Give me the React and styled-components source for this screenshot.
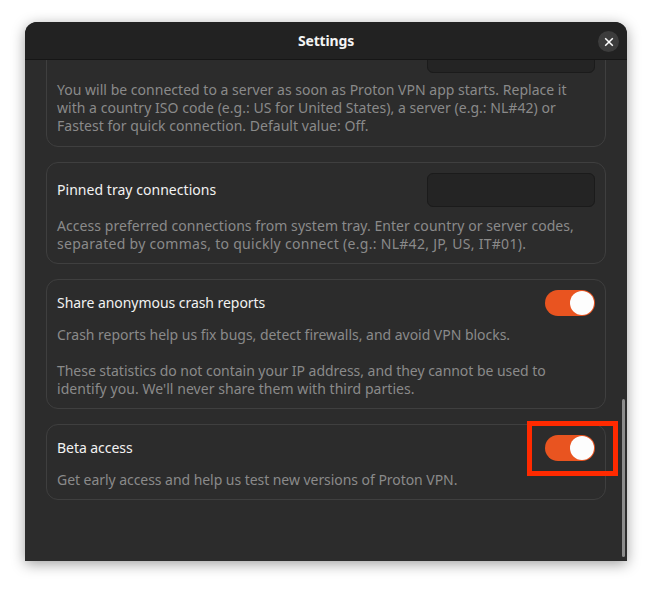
import React from "react";
import styled, { createGlobalStyle } from "styled-components";

const Global = createGlobalStyle`
  html, body { margin: 0; padding: 0; background: #fff; }
  body { width: 652px; height: 589px; overflow: hidden; font-family: "Noto Sans", "Open Sans", sans-serif; }
`;
const Page = styled.div`
  width: 652px;
  height: 589px;
  padding: 22px 25px 28px;
  box-sizing: border-box;
`;
const Window = styled.div`
  position: relative;
  width: 602px;
  height: 539px;
  display: flex;
  flex-direction: column;
  background: #2c2c2c;
  border-radius: 12px 12px 0 0;
  box-shadow: 0 3px 14px rgba(0, 0, 0, 0.38);
  overflow: hidden;
`;
const Header = styled.header`
  flex: none;
  height: 37px;
  display: flex;
  align-items: center;
  justify-content: center;
  background: #222222;
  border-bottom: 1px solid #161616;
`;
const Title = styled.h1`
  margin: 0;
  font-size: 14px;
  font-weight: 700;
  color: #f4f4f4;
  letter-spacing: -0.17px;
`;
const Close = styled.button`
  position: absolute;
  top: 9px;
  right: 8px;
  width: 21px;
  height: 21px;
  padding: 0;
  border: 0;
  border-radius: 50%;
  background: #3c3c3c;
  color: #fff;
  display: flex;
  align-items: center;
  justify-content: center;
`;
const Viewport = styled.div`
  flex: 1;
  min-height: 0;
  overflow: hidden;
`;
const Content = styled.div`
  display: flex;
  flex-direction: column;
  gap: 15px;
  margin: -27px 21px 0;
`;
const Card = styled.section`
  box-sizing: border-box;
  height: ${(p) => p.$h}px;
  padding: ${(p) => p.$pt}px 10px 0;
  border: 1px solid #3f3f3f;
  border-radius: 12px;
`;
const Row = styled.div`
  display: flex;
  justify-content: space-between;
  align-items: center;
  height: ${(p) => p.$h}px;
  margin-bottom: ${(p) => p.$mb}px;
`;
const Label = styled.span`
  font-size: 14px;
  color: #f2f2f2;
  letter-spacing: ${(p) => p.$ls ?? -0.05}px;
  margin-bottom: 2px;
`;
const Field = styled.div`
  width: 168px;
  height: 34px;
  box-sizing: border-box;
  background: #242424;
  border: 1px solid #1b1b1b;
  border-radius: 6px;
`;
const Desc = styled.p`
  margin: 0 0 ${(p) => p.$mb ?? 0}px;
  font-size: 14px;
  line-height: 18px;
  color: #8a8a8a;
  letter-spacing: ${(p) => p.$ls ?? 0.03}px;
  white-space: nowrap;
`;
const Toggle = styled.div`
  width: 50px;
  height: 26px;
  box-sizing: border-box;
  padding: 1px;
  border-radius: 13px;
  background: #e95420;
  display: flex;
  justify-content: flex-end;
`;
const Knob = styled.div`
  width: 24px;
  height: 24px;
  border-radius: 50%;
  background: #fdfdfd;
`;
const Scrollbar = styled.div`
  position: absolute;
  top: 377px;
  right: 2px;
  width: 3px;
  height: 158px;
  border-radius: 2px;
  background: #8c8c8c;
`;
const Highlight = styled.div`
  position: absolute;
  top: 399px;
  left: 502px;
  width: 91px;
  height: 55px;
  box-sizing: border-box;
  border: 5px solid #ff2a00;
`;

const Switch = () => (
  <Toggle>
    <Knob />
  </Toggle>
);

export default function App() {
  return (
    <Page>
      <Global />
      <Window>
        <Header>
          <Title>Settings</Title>
          <Close aria-label="Close">
            <svg width="10" height="10" viewBox="0 0 10 10" fill="none">
              <path d="M1.2 1.2l7.6 7.6M8.8 1.2l-7.6 7.6" stroke="#fff" strokeWidth="1.5" />
            </svg>
          </Close>
        </Header>
        <Viewport>
          <Content>
            <Card $h={114} $pt={5}>
              <Row $h={34} $mb={8}>
                <span />
                <Field />
              </Row>
              <Desc $ls={0.02}>You will be connected to a server as soon as Proton VPN app starts. Replace it</Desc>
              <Desc>with a country ISO code (e.g.: US for United States), a server (e.g.: NL#42) or</Desc>
              <Desc>Fastest for quick connection. Default value: Off.</Desc>
            </Card>
            <Card $h={102} $pt={10}>
              <Row $h={34} $mb={10}>
                <Label $ls={0.04}>Pinned tray connections</Label>
                <Field />
              </Row>
              <Desc $ls={0.055}>Access preferred connections from system tray. Enter country or server codes,</Desc>
              <Desc $ls={0.29}>separated by commas, to quickly connect (e.g.: NL#42, JP, US, IT#01).</Desc>
            </Card>
            <Card $h={130} $pt={10}>
              <Row $h={26} $mb={10}>
                <Label>Share anonymous crash reports</Label>
                <Switch />
              </Row>
              <Desc $mb={18} $ls={-0.025}>Crash reports help us fix bugs, detect firewalls, and avoid VPN blocks.</Desc>
              <Desc $ls={-0.035}>These statistics do not contain your IP address, and they cannot be used to</Desc>
              <Desc $ls={0.05}>identify you. We'll never share them with third parties.</Desc>
            </Card>
            <Card $h={76} $pt={10}>
              <Row $h={26} $mb={10}>
                <Label>Beta access</Label>
                <Switch />
              </Row>
              <Desc $ls={-0.05}>Get early access and help us test new versions of Proton VPN.</Desc>
            </Card>
          </Content>
        </Viewport>
        <Scrollbar />
        <Highlight />
      </Window>
    </Page>
  );
}
